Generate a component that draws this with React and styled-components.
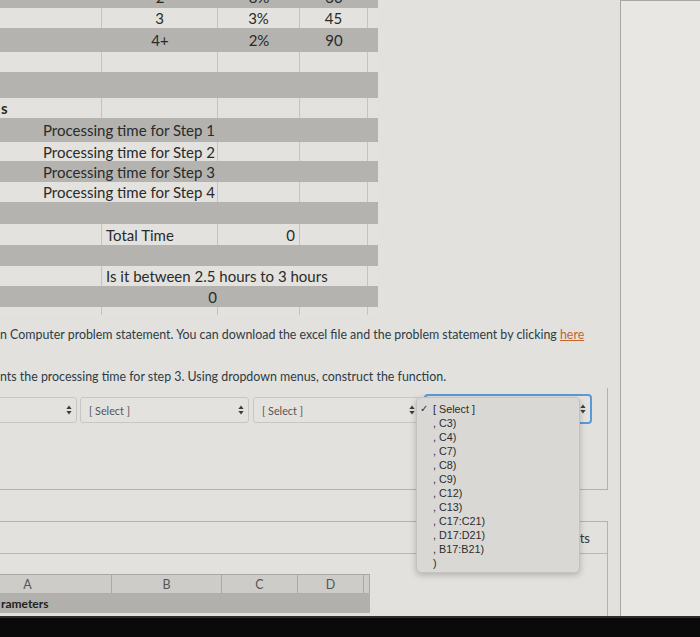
import React from 'react'
import styled, { createGlobalStyle } from 'styled-components'

const GlobalStyle = createGlobalStyle`
  html, body {
    margin: 0;
    padding: 0;
  }
  body {
    background: #e2e1dd;
    font-family: Lato, "Open Sans", sans-serif;
  }
`

const Page = styled.div`
  width: 700px;
  height: 637px;
  display: flex;
  flex-direction: column;
  overflow: hidden;
`

const Body = styled.div`
  flex: 1;
  display: flex;
  min-height: 0;
`

const Main = styled.div`
  width: 621px;
  box-sizing: border-box;
  border-right: 1px solid #a8a7a3;
  display: flex;
  flex-direction: column;
  overflow: hidden;
`

const Side = styled.div`
  flex: 1;
  background: #e8e7e4;
  border-top: 1px solid #a9a8a4;
`

const BlackBar = styled.div`
  height: 19px;
  background: #0a0a0a;
  border-top: 2px solid #2c2c2c;
`

/* ---------- spreadsheet picture ---------- */

const Sheet = styled.div`
  width: 378px;
  display: flex;
  flex-direction: column;
`

const SheetRow = styled.div`
  display: grid;
  grid-template-columns: 102px 116px 82px 68px 10px;
  height: ${p => p.$h}px;
  background: ${p => (p.$dark ? '#b4b3af' : '#e3e2de')};
  overflow: hidden;
`

const Cell = styled.div`
  grid-column: span ${p => p.$span || 1};
  display: flex;
  align-items: center;
  justify-content: ${p => p.$align || 'flex-start'};
  padding-left: ${p => p.$pl || 0}px;
  padding-right: ${p => p.$pr || 0}px;
  border-right: ${p => (p.$line ? '1px solid #c4c3bf' : 'none')};
  font-size: 15px;
  font-weight: ${p => (p.$bold ? 700 : 400)};
  color: #2a2a2a;
  white-space: nowrap;
  overflow: visible;
  line-height: 20px;
  margin-top: ${p => (p.$clip ? '-13px' : '0')};
  height: ${p => (p.$clip ? '20px' : 'auto')};
`

const sheetRows = [
  { h: 8, dark: true, clip: true, cells: [{}, { t: '2', a: 'center' }, { t: '8%', a: 'center' }, { t: '30', a: 'center' }] },
  { h: 20, cells: [{}, { t: '3', a: 'center' }, { t: '3%', a: 'center' }, { t: '45', a: 'center' }] },
  { h: 24, dark: true, cells: [{}, { t: '4+', a: 'center' }, { t: '2%', a: 'center' }, { t: '90', a: 'center' }] },
  { h: 20, cells: [{}, {}, {}, {}] },
  { h: 26, dark: true, cells: [] },
  { h: 20, cells: [{ t: 's', bold: true, pl: 1 }, {}, {}, {}] },
  { h: 24, dark: true, cells: [{ t: 'Processing time for Step 1', span: 2, pl: 43 }] },
  { h: 19, cells: [{ t: 'Processing time for Step 2', span: 2, pl: 43 }, {}, {}] },
  { h: 21, dark: true, cells: [{ t: 'Processing time for Step 3', span: 2, pl: 43 }] },
  { h: 20, cells: [{ t: 'Processing time for Step 4', span: 2, pl: 43 }, {}, {}] },
  { h: 22, dark: true, cells: [] },
  { h: 21, cells: [{}, { t: 'Total Time', pl: 4 }, { t: '0', a: 'flex-end', pr: 4 }, {}] },
  { h: 21, dark: true, cells: [] },
  { h: 20, cells: [{}, { t: 'Is it between 2.5 hours to 3 hours', span: 3, pl: 4 }] },
  { h: 21, dark: true, cells: [{}, { t: '0', a: 'flex-end', pr: 1 }] },
  { h: 8, cells: [{}, {}, {}, {}] },
]

/* ---------- question text ---------- */

const Para = styled.p`
  margin: ${p => p.$top}px 0 0;
  font-size: 12.4px;
  line-height: 18px;
  color: #2d3b45;
  white-space: nowrap;
`

const Link = styled.a`
  color: #c4652f;
  text-decoration: underline;
`

/* ---------- dropdown question ---------- */

const QuestionBox = styled.div`
  position: relative;
  width: 608px;
  height: 102px;
  box-sizing: border-box;
  margin-top: 2px;
  border-right: 1px solid #b3b2ae;
  border-bottom: 1px solid #b3b2ae;
`

const SelectRow = styled.div`
  display: flex;
  align-items: flex-start;
  gap: 3px;
  padding-top: 9px;
  margin-left: -10px;
`

const SelectBox = styled.div`
  width: ${p => p.$w}px;
  height: ${p => (p.$focus ? 30 : 26)}px;
  margin-top: ${p => (p.$focus ? -3 : 0)}px;
  margin-left: ${p => p.$ml || 0}px;
  box-sizing: border-box;
  flex-shrink: 0;
  display: flex;
  align-items: center;
  justify-content: space-between;
  padding: 0 4px 0 8px;
  border: ${p => (p.$focus ? '2px solid #5b99d6' : '1px solid #c8c6c2')};
  border-radius: ${p => (p.$focus ? 4 : 3)}px;
  background: #e3e2de;
  font-size: 10.8px;
  color: #555;
`

const Arrows = () => (
  <svg width="6" height="10" viewBox="0 0 6 10">
    <path d="M3 0.5 L5.6 4 H0.4 Z" fill="#3b3b3b" />
    <path d="M3 9.5 L5.6 6 H0.4 Z" fill="#3b3b3b" />
  </svg>
)

const Menu = styled.div`
  position: absolute;
  left: 416px;
  top: 9px;
  width: 164px;
  height: 176px;
  box-sizing: border-box;
  padding-top: 4px;
  background: #dad8d4;
  border: 1px solid #c4c2be;
  border-radius: 5px;
  box-shadow: 0 2px 6px rgba(0, 0, 0, 0.22);
  z-index: 2;
`

const MenuItem = styled.div`
  position: relative;
  padding-left: 16px;
  height: 14px;
  line-height: 14px;
  font-family: "Liberation Sans", Arial, sans-serif;
  font-size: 10.8px;
  color: #2c2c2c;
`

const Check = styled.span`
  position: absolute;
  left: 3px;
  top: 0;
  font-size: 10px;
`

const menuItems = [', C3)', ', C4)', ', C7)', ', C8)', ', C9)', ', C12)', ', C13)', ', C17:C21)', ', D17:D21)', ', B17:B21)', ')']

/* ---------- lower rows ---------- */

const PlainRow = styled.div`
  width: 608px;
  height: 32px;
  box-sizing: border-box;
  border-bottom: 1px solid #b3b2ae;
`

const TableBox = styled.div`
  width: 608px;
  flex: 1;
  box-sizing: border-box;
  border-right: 1px solid #b3b2ae;
  display: flex;
  flex-direction: column;
`

const TableHead = styled.div`
  height: 32px;
  box-sizing: border-box;
  border-bottom: 1px solid #b8b7b3;
  display: flex;
  align-items: center;
  justify-content: flex-end;
  padding-right: 17px;
  font-size: 13px;
  color: #333;
`

const TableBody = styled.div`
  flex: 1;
  padding-top: 20px;
`

const Sheet2 = styled.div`
  width: 426px;
  margin-left: -56px;
`

const HeadRow = styled.div`
  display: grid;
  grid-template-columns: 168px 110px 76px 66px 6px;
  height: 18px;
  background: #cdccc8;
  border-top: 1px solid #a9a8a4;
`

const HeadCell = styled.div`
  display: flex;
  align-items: center;
  justify-content: center;
  border-right: 1px solid #a9a8a4;
  font-size: 12.5px;
  color: #555;
`

const ParamRow = styled.div`
  height: 20px;
  background: #b1b0ac;
  display: flex;
  align-items: center;
  padding-left: 57px;
  font-size: 12px;
  font-weight: 700;
  color: #222;
`

const App = () => {
  return (
    <Page>
      <GlobalStyle />
      <Body>
        <Main>
          <Sheet>
            {sheetRows.map((row, i) => {
              const used = row.cells.reduce((n, c) => n + (c.span || 1), 0)
              return (
                <SheetRow key={i} $h={row.h} $dark={row.dark}>
                  {row.cells.map((c, j) => (
                    <Cell
                      key={j}
                      $span={c.span}
                      $align={c.a}
                      $pl={c.pl}
                      $pr={c.pr}
                      $bold={c.bold}
                      $clip={row.clip}
                      $line={!row.dark}
                    >
                      {c.t}
                    </Cell>
                  ))}
                  {used < 5 && <Cell $span={5 - used} />}
                </SheetRow>
              )
            })}
          </Sheet>

          <Para $top={11}>
            n Computer problem statement. You can download the excel file and the problem statement by clicking <Link>here</Link>
          </Para>
          <Para $top={24}>
            nts the processing time for step 3. Using dropdown menus, construct the function.
          </Para>

          <QuestionBox>
            <SelectRow>
              <SelectBox $w={87}>
                <span />
                <Arrows />
              </SelectBox>
              <SelectBox $w={169}>
                [ Select ]
                <Arrows />
              </SelectBox>
              <SelectBox $w={167} $ml={1}>
                [ Select ]
                <Arrows />
              </SelectBox>
              <SelectBox $w={168} $focus $ml={1}>
                <span />
                <Arrows />
              </SelectBox>
            </SelectRow>
            <Menu>
              <MenuItem>
                <Check>✓</Check>[ Select ]
              </MenuItem>
              {menuItems.map(m => (
                <MenuItem key={m}>{m}</MenuItem>
              ))}
            </Menu>
          </QuestionBox>

          <PlainRow />

          <TableBox>
            <TableHead>ts</TableHead>
            <TableBody>
              <Sheet2>
                <HeadRow>
                  <HeadCell>A</HeadCell>
                  <HeadCell>B</HeadCell>
                  <HeadCell>C</HeadCell>
                  <HeadCell>D</HeadCell>
                  <HeadCell />
                </HeadRow>
                <ParamRow>rameters</ParamRow>
              </Sheet2>
            </TableBody>
          </TableBox>
        </Main>
        <Side />
      </Body>
      <BlackBar />
    </Page>
  )
}

export default App
